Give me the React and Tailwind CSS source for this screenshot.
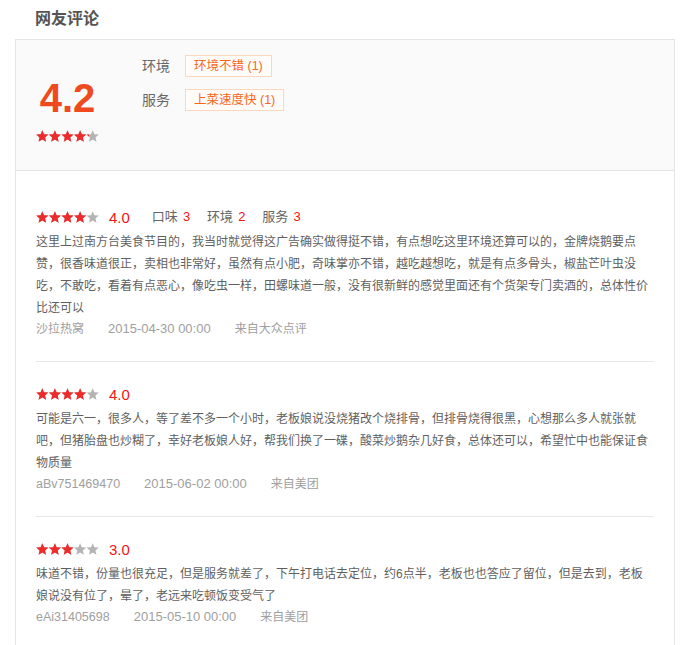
import React from 'react';

const FONT = { fontFamily: "'Liberation Sans', 'Noto Sans CJK SC', sans-serif" };

const starPoints = (cx, cy, r, ir) => {
  const pts = [];
  for (let i = 0; i < 10; i++) {
    const rad = i % 2 === 0 ? r : ir;
    const a = -Math.PI / 2 + (i * Math.PI) / 5;
    pts.push(`${(cx + rad * Math.cos(a)).toFixed(2)},${(cy + rad * Math.sin(a)).toFixed(2)}`);
  }
  return pts.join(' ');
};

const Stars = ({ value, id }) => {
  const step = 12.6;
  const width = step * 5;
  return (
    <svg width={63} height={12} viewBox="0 0 63 12" className="block shrink-0">
      <defs>
        <clipPath id={`clip-${id}`}>
          <rect x="0" y="0" width={(value / 5) * width} height="12" />
        </clipPath>
      </defs>
      <g fill="#b4b4b4">
        {[0, 1, 2, 3, 4].map((i) => (
          <polygon key={i} points={starPoints(i * step + 6.3, 6.6, 6.4, 2.9)} />
        ))}
      </g>
      <g fill="#ee2a2a" clipPath={`url(#clip-${id})`}>
        {[0, 1, 2, 3, 4].map((i) => (
          <polygon key={i} points={starPoints(i * step + 6.3, 6.6, 6.4, 2.9)} />
        ))}
      </g>
    </svg>
  );
};

const reviews = [
  {
    score: 4,
    dims: [
      ['口味', 3],
      ['环境', 2],
      ['服务', 3],
    ],
    text: '这里上过南方台美食节目的，我当时就觉得这广告确实做得挺不错，有点想吃这里环境还算可以的，金牌烧鹅要点赞，很香味道很正，卖相也非常好，虽然有点小肥，奇味掌亦不错，越吃越想吃，就是有点多骨头，椒盐芒叶虫没吃，不敢吃，看着有点恶心，像吃虫一样，田螺味道一般，没有很新鲜的感觉里面还有个货架专门卖酒的，总体性价比还可以',
    user: '沙拉热窝',
    date: '2015-04-30 00:00',
    from: '来自大众点评',
  },
  {
    score: 4,
    dims: [],
    text: '可能是六一，很多人，等了差不多一个小时，老板娘说没烧猪改个烧排骨，但排骨烧得很黑，心想那么多人就张就吧，但猪胎盘也炒糊了，幸好老板娘人好，帮我们换了一碟，酸菜炒鹅杂几好食，总体还可以，希望忙中也能保证食物质量',
    user: 'aBv751469470',
    date: '2015-06-02 00:00',
    from: '来自美团',
  },
  {
    score: 3,
    dims: [],
    text: '味道不错，份量也很充足，但是服务就差了，下午打电话去定位，约6点半，老板也也答应了留位，但是去到，老板娘说没有位了，晕了，老远来吃顿饭变受气了',
    user: 'eAi31405698',
    date: '2015-05-10 00:00',
    from: '来自美团',
  },
];

const isLatin = (s) => /^[\x00-\x7f]+$/.test(s);

const Review = ({ r, idx }) => (
  <div className="pt-[20px] pb-[22px] border-b border-[#e8e8e8]">
    <div className="flex items-center h-[24px]">
      <Stars value={r.score} id={`r${idx}`} />
      <span className="ml-[10px] text-[15px] leading-none text-[#f51414]">{r.score.toFixed(1)}</span>
      {r.dims.length > 0 && (
        <div className="flex items-center ml-[22px] gap-[17px] text-[13px]">
          {r.dims.map(([k, v]) => (
            <span key={k} className="flex items-center">
              <span className="text-[#666]">{k}</span>
              <span className="ml-[5px] text-[#f51414]">{v}</span>
            </span>
          ))}
        </div>
      )}
    </div>
    <p className="mt-[2px] pr-[3px] text-[12px] leading-[22px] text-[#5f5f5f]">{r.text}</p>
    <div className="flex items-center gap-[24px] h-[20px] text-[#a0a0a0]">
      <span className={isLatin(r.user) ? 'text-[12.5px]' : 'text-[12px]'}>{r.user}</span>
      <span className="text-[13px]">{r.date}</span>
      <span className="text-[12px]">{r.from}</span>
    </div>
  </div>
);

const Tag = ({ label, tag }) => (
  <div className="flex items-center">
    <span className="w-[43px] text-[14px] text-[#666]">{label}</span>
    <span className="h-[22px] px-[8px] border border-[#fad7bd] bg-[#fffcfa] text-[12.5px] leading-[20px] text-[#f8661a]">
      {tag}
    </span>
  </div>
);

export default function App() {
  return (
    <div className="w-[689px] h-[645px] overflow-hidden bg-white" style={FONT}>
      <h2 className="pl-[35px] pt-[7px] pb-[8px] text-[16px] leading-[24px] font-bold text-[#555]">网友评论</h2>
      <div className="ml-[15px] w-[660px] border border-[#e5e5e5]">
        <div className="flex h-[131px] bg-[#fafafa] border-b border-[#e5e5e5] pl-[20px]">
          <div className="w-[63px] flex flex-col items-center pt-[38px]">
            <div className="text-[40px] leading-[40px] font-bold text-[#ef4a1e]">4.2</div>
            <div className="mt-[12px]">
              <Stars value={4.2} id="sum" />
            </div>
          </div>
          <div className="ml-[43px] pt-[15px] flex flex-col gap-[12px]">
            <Tag label="环境" tag="环境不错 (1)" />
            <Tag label="服务" tag="上菜速度快 (1)" />
          </div>
        </div>
        <div className="px-[20px] pt-[14px]">
          {reviews.map((r, i) => (
            <Review key={i} r={r} idx={i} />
          ))}
        </div>
      </div>
    </div>
  );
}
